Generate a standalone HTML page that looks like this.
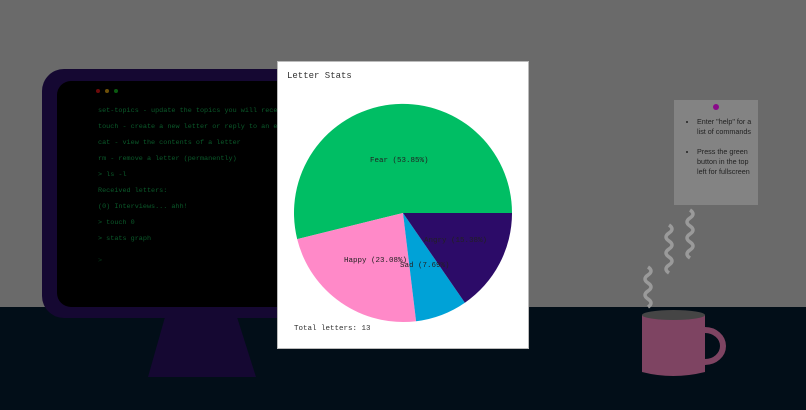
<!DOCTYPE html>
<html><head><meta charset="utf-8"><style>
*{margin:0;padding:0;box-sizing:border-box}
body{width:806px;height:410px;overflow:hidden;background:#6a6a6a;position:relative;font-family:"Liberation Mono",monospace}
.desk{position:absolute;left:0;top:307px;width:806px;height:103px;background:#020e18}
.mon{position:absolute;left:42px;top:69px;width:300px;height:249px;background:#150832;border-radius:22px}
.scr{position:absolute;left:57px;top:81px;width:290px;height:226px;background:#000;border-radius:14px}
.term{position:absolute;left:98px;top:103px;color:#0a5a2a;font-size:6.8px;line-height:16px;white-space:pre}
.dot{position:absolute;top:89px;width:4px;height:4px;border-radius:50%}
.modal{position:absolute;left:277px;top:61px;width:252px;height:288px;background:#fff;border:1px solid #bbb}
.note{position:absolute;left:674px;top:100px;width:84px;height:105px;background:#838383;font-family:"Liberation Sans",sans-serif;font-size:7.2px;color:#222;line-height:10px}
</style></head><body>
<div class="desk"></div>
<svg style="position:absolute;left:0;top:0" width="806" height="410">
<polygon points="165,317 237,317 256,377 148,377" fill="#150832"/>
</svg>
<div class="mon"></div>
<div class="scr"></div>
<div class="dot" style="left:96px;background:#6e0a0a"></div>
<div class="dot" style="left:105px;background:#6e5008"></div>
<div class="dot" style="left:114px;background:#0a5a10"></div>
<div class="term">set-topics - update the topics you will receive
touch - create a new letter or reply to an existing
cat - view the contents of a letter
rm - remove a letter (permanently)
&gt; ls -l
Received letters:
(0) Interviews... ahh!
&gt; touch 0
&gt; stats graph
</div>
<div class="term" style="top:253px;color:#063a1a">&gt;</div>
<div class="note">
<div style="width:6px;height:6px;border-radius:50%;background:#8a0a8a;margin:4px auto 0"></div>
<ul style="padding-left:23px;margin-top:7px;padding-right:2px">
<li>Enter "help" for a list of commands</li>
<li style="margin-top:10px">Press the green button in the top left for fullscreen</li>
</ul></div>
<svg style="position:absolute;left:0;top:0" width="806" height="410">
<g fill="none" stroke="#9a9a9a" stroke-width="3.5">
<path d="M690 210 q6 4 0 8 q-6 4 0 8 q6 4 0 8 q-6 4 0 8 q6 4 0 8 q-6 4 0 8"/>
<path d="M669 225 q6 4 0 8 q-6 4 0 8 q6 4 0 8 q-6 4 0 8 q6 4 0 8 q-6 4 0 8"/>
<path d="M648 267 q6 4 0 8 q-6 4 0 8 q6 4 0 8 q-6 4 0 8 q6 4 0 8"/>
</g>
<path d="M705 330 a18 16 0 1 1 0 32" fill="none" stroke="#7e4462" stroke-width="6"/>
<path d="M642 315 L705 315 L705 372 Q673 380 642 372 Z" fill="#7e4462"/>
<ellipse cx="673.5" cy="315" rx="31.5" ry="5" fill="#454545"/>
</svg>
<div class="modal"></div>
<svg style="position:absolute;left:0;top:0" width="806" height="410" font-family="Liberation Mono,monospace" font-size="7.5" fill="#333">
<text x="287" y="78" font-size="9" fill="#333">Letter Stats</text>
<path d="M403 213 L512 213 A109 109 0 1 0 297.2 239.1 Z" fill="#00be64"/>
<path d="M403 213 L297.2 239.1 A109 109 0 0 0 416.1 321.2 Z" fill="#ff89c8"/>
<path d="M403 213 L416.1 321.2 A109 109 0 0 0 464.9 302.7 Z" fill="#00a2d7"/>
<path d="M403 213 L464.9 302.7 A109 109 0 0 0 512 213 Z" fill="#2c0b68"/>
<text x="370" y="162" fill="#222">Fear (53.85%)</text>
<text x="344" y="262" fill="#222">Happy (23.08%)</text>
<text x="400" y="267" fill="#222">Sad (7.69%)</text>
<text x="424" y="242" fill="#222">Angry (15.38%)</text>
<text x="294" y="330" fill="#333">Total letters: 13</text>
</svg>
</body></html>
